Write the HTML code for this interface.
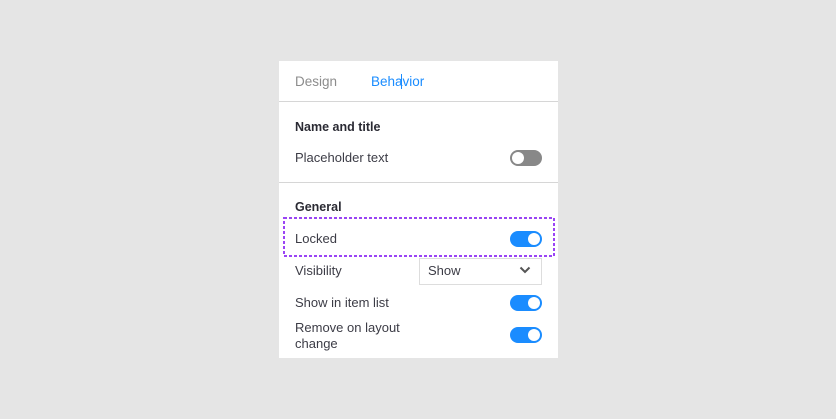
<!DOCTYPE html>
<html><head><style>
body{margin:0;width:836px;height:419px;background:#e5e5e5;font-family:"Liberation Sans",sans-serif;position:relative;overflow:hidden}
.p{position:absolute;left:279px;top:61px;width:279px;height:297px;background:#fff}
.t{position:absolute;font-size:13px;color:#3c3c46;line-height:16px;white-space:nowrap}
.b{font-weight:bold;color:#2a2a33;font-size:12.5px}
.hr{position:absolute;left:279px;width:279px;height:1px;background:#d6d6d6}
.tg{position:absolute;left:510px;width:32px;height:16px;border-radius:8px;background:#1a8cff}
.tg:after{content:"";position:absolute;top:2px;right:2px;width:12px;height:12px;border-radius:50%;background:#fff}
.off{background:#888}.off:after{right:auto;left:2px}
</style></head><body>
<div class="p"></div>
<div class="t" style="left:295px;top:74px;color:#8c8c8c;font-size:13.5px">Design</div>
<div class="t" style="left:371px;top:74px;color:#1a8cff;font-size:13.5px">Behavior</div>
<div style="position:absolute;left:401px;top:74px;width:1px;height:15px;background:#1a8cff"></div>
<div class="hr" style="top:101px"></div>
<div class="t b" style="left:295px;top:119px">Name and title</div>
<div class="t" style="left:295px;top:150px">Placeholder text</div>
<div class="tg off" style="top:150px"></div>
<div class="hr" style="top:182px"></div>
<div class="t b" style="left:295px;top:199px">General</div>
<svg style="position:absolute;left:283px;top:217px" width="272" height="40"><rect x="1" y="1" width="270" height="38" fill="none" stroke="#9a44f5" stroke-width="2" stroke-dasharray="3 2"/></svg>
<div class="t" style="left:295px;top:231px">Locked</div>
<div class="tg" style="top:231px"></div>
<div class="t" style="left:295px;top:263px">Visibility</div>
<div style="position:absolute;left:419px;top:258px;width:121px;height:25px;border:1px solid #ddd"></div>
<div class="t" style="left:428px;top:263px">Show</div>
<svg style="position:absolute;left:519px;top:266px" width="12" height="8"><path d="M1.5 1.5L6 6 10.5 1.5" fill="none" stroke="#555" stroke-width="2"/></svg>
<div class="t" style="left:295px;top:295px">Show in item list</div>
<div class="tg" style="top:295px"></div>
<div class="t" style="left:295px;top:320px">Remove on layout</div>
<div class="t" style="left:295px;top:336px">change</div>
<div class="tg" style="top:327px"></div>
</body></html>
